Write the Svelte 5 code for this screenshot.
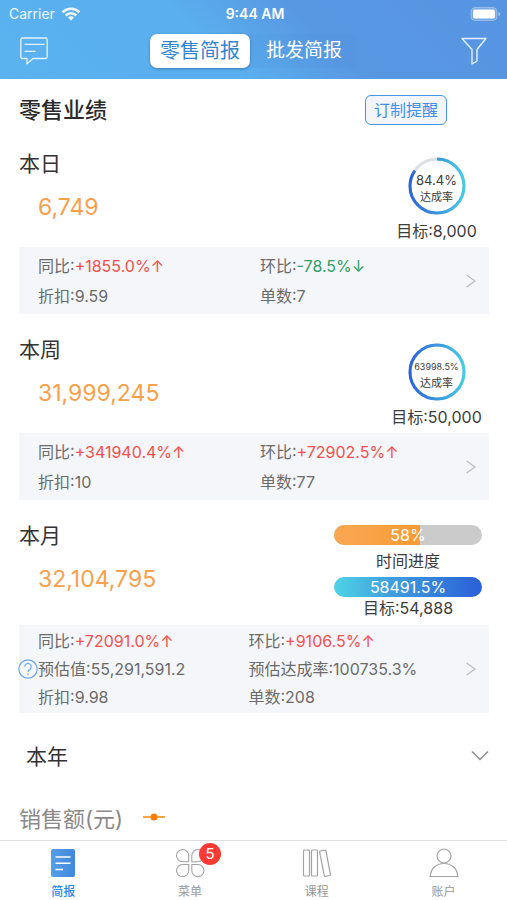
<script>
  let mode = $state('retail');
  let tab = $state('brief');

  const RING = 2 * Math.PI * 27;

  const periods = [
    {
      id: 'day',
      name: '本日',
      value: '6,749',
      rate: '84.4%',
      ratio: 0.844,
      target: '8,000',
      stats: [
        { label: '同比', value: '+1855.0%↑', trend: 'up' },
        { label: '环比', value: '-78.5%↓', trend: 'down' },
        { label: '折扣', value: '9.59' },
        { label: '单数', value: '7' }
      ]
    },
    {
      id: 'week',
      name: '本周',
      value: '31,999,245',
      rate: '63998.5%',
      ratio: 1,
      target: '50,000',
      stats: [
        { label: '同比', value: '+341940.4%↑', trend: 'up' },
        { label: '环比', value: '+72902.5%↑', trend: 'up' },
        { label: '折扣', value: '10' },
        { label: '单数', value: '77' }
      ]
    },
    {
      id: 'month',
      name: '本月',
      value: '32,104,795',
      rate: '58491.5%',
      time: 58,
      target: '54,888',
      stats: [
        { label: '同比', value: '+72091.0%↑', trend: 'up' },
        { label: '环比', value: '+9106.5%↑', trend: 'up' },
        { label: '预估值', value: '55,291,591.2' },
        { label: '预估达成率', value: '100735.3%' },
        { label: '折扣', value: '9.98' },
        { label: '单数', value: '208' }
      ]
    }
  ];

  const tabs = [
    { id: 'brief', label: '简报' },
    { id: 'menu', label: '菜单', badge: 5 },
    { id: 'course', label: '课程' },
    { id: 'account', label: '账户' }
  ];
</script>

<div class="app">
  <header>
    <div class="status">
      <span class="carrier">
        Carrier
        <svg width="20" height="14" viewBox="0 0 20 14" fill="none" stroke="#fff" stroke-width="2.6">
          <path d="M1.6 5.2a12 12 0 0 1 16.8 0" />
          <path d="M4.7 8.5a7.5 7.5 0 0 1 10.6 0" />
          <path d="M10 13.6 6.9 10.5a4.4 4.4 0 0 1 6.2 0z" fill="#fff" stroke="none" />
        </svg>
      </span>
      <span class="clock">9:44 AM</span>
      <span class="battery">
        <svg width="31" height="14" viewBox="0 0 31 14">
          <rect x="1" y="0.5" width="26" height="13" rx="4" fill="#fff" fill-opacity=".2" stroke="#fff" stroke-opacity=".3" />
          <rect x="3" y="2.5" width="22" height="9" rx="2" fill="#fff" />
          <path d="M28.5 5v4q1.8-.6 1.8-2t-1.8-2z" fill="#fff" fill-opacity=".5" />
        </svg>
      </span>
    </div>
    <nav class="top">
      <button class="icon" aria-label="消息">
        <svg width="28" height="28" viewBox="0 0 28 28" fill="none" stroke="#e4f2fd" stroke-width="1.3" stroke-linejoin="round">
          <path d="M2.5 1h23q1.7 0 1.7 1.7v17.1q0 1.7-1.7 1.7H13L7 26.8v-5.3H2.5Q.8 21.5.8 19.8V2.7Q.8 1 2.5 1z" />
          <path d="M4.5 7.3h20M4.500 14.3h11" />
        </svg>
      </button>
      <div class="seg">
        <button class:active={mode === 'retail'} onclick={() => (mode = 'retail')}>零售简报</button>
        <button class:active={mode === 'wholesale'} onclick={() => (mode = 'wholesale')}>批发简报</button>
      </div>
      <button class="icon" aria-label="筛选">
        <svg width="28" height="28" viewBox="0 0 28 28" fill="none" stroke="#e4f0fd" stroke-width="1.4" stroke-linejoin="round">
          <path d="M2 1.5h24L17 12.5V24l-5 3V12.500z" />
        </svg>
      </button>
    </nav>
  </header>

  <main>
    <div class="heading">
      <h1>零售业绩</h1>
      <button class="remind">订制提醒</button>
    </div>

    {#each periods as p}
      <section class={p.id}>
        <div class="summary">
          <div>
            <h2>{p.name}</h2>
            <p class="value">{p.value}</p>
          </div>
          {#if p.time}
            <div class="bars">
              <div class="bar time">
                <i style="width: {p.time}%"></i>
                <span>{p.time}%</span>
              </div>
              <p class="bar-label">时间进度</p>
              <div class="bar rate"><span>{p.rate}</span></div>
              <p class="target">目标:{p.target}</p>
            </div>
          {:else}
            <div class="goal">
              <div class="ring">
                <svg width="58" height="58" viewBox="0 0 58 58" fill="none" stroke-width="3">
                  <defs>
                    <!-- runs top to bottom here, the arc is turned a quarter left -->
                    <linearGradient id="ring-{p.id}" gradientUnits="userSpaceOnUse" x1="0" y1="0" x2="0" y2="58">
                      <stop offset="0" stop-color="#2a5fd8" />
                      <stop offset="1" stop-color="#46cfe4" />
                    </linearGradient>
                  </defs>
                  <circle cx="29" cy="29" r="27" stroke="#dcdfe3" />
                  <circle
                    cx="29"
                    cy="29"
                    r="27"
                    stroke="url(#ring-{p.id})"
                    stroke-dasharray="{RING * p.ratio} {RING}"
                    transform="rotate(-90 29 29)"
                  />
                </svg>
                <div class="ring-text">
                  <b class:small={p.rate.length > 6}>{p.rate}</b>
                  <span>达成率</span>
                </div>
              </div>
              <p class="target">目标:{p.target}</p>
            </div>
          {/if}
        </div>

        <div class="panel">
          {#if p.id === 'month'}
            <button class="help" aria-label="说明">
              <svg width="20" height="20" viewBox="0 0 20 20" fill="none" stroke="#6fa6ee" stroke-width="1.2">
                <circle cx="10" cy="10" r="9.2" />
                <path d="M6.8 7.8a3.2 3.2 0 1 1 5.2 2.4Q10 11.5 10 13M10 14.5V16" />
              </svg>
            </button>
          {/if}
          <a href="#{p.id}">
            <div class="stats">
              {#each p.stats as s}
                <span>{s.label}:<em class={s.trend}>{s.value}</em></span>
              {/each}
            </div>
            <svg width="10" height="14" viewBox="0 0 10 14" fill="none" stroke="#b9bcc0" stroke-width="1.3">
              <path d="M.6 1 9 7 .6 13" />
            </svg>
          </a>
        </div>
      </section>
    {/each}

    <button class="year">
      本年
      <svg width="18" height="11" viewBox="0 0 18 11" fill="none" stroke="#8c8c8c" stroke-width="1.5">
        <path d="M1 1.5l8 8 8-8" />
      </svg>
    </button>

    <div class="legend">
      销售额(元)
      <svg width="22" height="8" viewBox="0 0 22 8">
        <path d="M0 4h22" stroke="#ffa64d" stroke-width="2" />
        <circle cx="11" cy="4" r="3.5" fill="#ff8000" />
      </svg>
    </div>
  </main>

  <nav class="tabs">
    {#each tabs as t}
      <button class:on={tab === t.id} onclick={() => (tab = t.id)}>
        <span class="pic">
          {#if t.id === 'brief'}
            <svg width="30" height="30" viewBox="0 0 30 30">
              <defs>
                <linearGradient id="doc" x1="0" y1="0" x2="1" y2="0">
                  <stop offset="0" stop-color="#549fe8" />
                  <stop offset="1" stop-color="#4287dc" />
                </linearGradient>
              </defs>
              <rect x="3" y="1" width="24" height="28" rx="2" fill="url(#doc)" />
              <path d="M7.5 9h15M7.5 15.3h15M7.5 21.5H15" stroke="#fff" stroke-width="1.5" />
            </svg>
          {:else if t.id === 'menu'}
            <svg width="30" height="30" viewBox="0 0 30 30" fill="none" stroke="#a3a3a3" stroke-width="1.1">
              <path d="M13.7 13.7H7.6a6.1 6.1 0 1 1 6.1-6.1z" />
              <path d="M16.8 13.7V7.6a6.1 6.1 0 1 1 6.1 6.1z" />
              <path d="M13.7 16.5v6.1a6.1 6.1 0 1 1-6.1-6.1z" />
              <path d="M16.8 16.5h6.1a6.1 6.1 0 1 1-6.1 6.1z" />
            </svg>
          {:else if t.id === 'course'}
            <svg width="30" height="30" viewBox="0 0 30 30" fill="none" stroke="#a3a3a3" stroke-width="1.2">
              <rect x="1.5" y="2" width="6" height="26" rx="1" />
              <rect x="9.5" y="2" width="6" height="26" rx="1" />
              <path d="M18.2 3l4.800-.9q.8-.1 1 .7l4.400 23.700q.1.800-.7 1l-4.400.8q-.8.1-1-.7L17.600 4q-.1-.8.600-1z" />
            </svg>
          {:else}
            <svg width="30" height="30" viewBox="0 0 30 30" fill="none" stroke="#a3a3a3" stroke-width="1.2">
              <circle cx="15" cy="8" r="7" />
              <path d="M1.2 28.5C1.6 20.5 7.5 15.5 15 15.5s13.4 5 13.8 13z" />
            </svg>
          {/if}
          {#if t.badge}<span class="badge">{t.badge}</span>{/if}
        </span>
        {t.label}
      </button>
    {/each}
  </nav>
</div>

<style>
  :global(body) {
    margin: 0;
    background: #fff;
  }
  .app {
    display: flex;
    flex-direction: column;
    min-height: 100vh;
    font-family: Inter, "Noto Sans CJK SC", sans-serif;
    font-size: 16px;
    color: #3c3c3c;
  }
  button {
    font: inherit;
    color: inherit;
    background: none;
    border: 0;
    padding: 0;
    cursor: pointer;
  }
  h1, h2, p {
    margin: 0;
    font-weight: 400;
  }
  svg {
    display: block;
    flex: none;
  }

  header {
    background: linear-gradient(45deg, #5ab2ef 0%, #5aafee 42%, #5898e3 62%, #5794e1 100%);
    color: #fff;
  }
  .status {
    display: grid;
    grid-template-columns: 1fr auto 1fr;
    align-items: center;
    height: 27px;
    padding: 0 6px 0 9px;
    font-size: 14px;
  }
  .carrier {
    display: flex;
    align-items: center;
    gap: 6px;
    opacity: 0.9;
  }
  .clock {
    font-weight: 600;
  }
  .battery {
    justify-self: end;
  }
  .top {
    display: flex;
    align-items: center;
    justify-content: space-between;
    height: 48px;
    padding: 0 19px 4px 20px;
  }
  .seg {
    display: flex;
    border-radius: 7px;
    background: rgba(70, 130, 200, 0.08);
  }
  .seg button {
    height: 34px;
    padding: 0 16px;
    border-radius: 7px;
    font-size: 19px;
    line-height: 34px;
  }
  .seg button.active {
    padding: 0 10px;
    font-size: 20px;
    background: #fff;
    color: #3386cf;
    box-shadow: 0 1px 3px rgba(0, 50, 110, 0.4);
  }

  main {
    flex: 1;
    padding: 0 18px 0 19px;
  }
  .heading {
    display: flex;
    align-items: center;
    justify-content: space-between;
    padding: 16px 42px 3px 0;
  }
  h1 {
    font-size: 22px;
    line-height: 30px;
    font-weight: 500;
    color: #2b2b2b;
  }
  .remind {
    height: 30px;
    padding: 0 8px;
    border: 1px solid #4795e6;
    border-radius: 6px;
    background: #f2f6fb;
    color: #3f90e6;
    line-height: 28px;
  }

  .summary {
    display: flex;
    justify-content: space-between;
    height: 119px;
  }
  .month .summary {
    height: 125px;
  }
  h2 {
    padding-top: 21px;
    font-size: 21px;
    line-height: 30px;
    color: #333;
  }
  .value {
    padding: 13px 0 0 19px;
    font-size: 23px;
    line-height: 30px;
    color: #f9a04b;
  }
  .goal {
    width: 105px;
    padding-top: 29px;
    text-align: center;
  }
  .ring {
    display: grid;
    justify-items: center;
  }
  .ring svg,
  .ring-text {
    grid-area: 1 / 1;
  }
  .ring-text {
    display: flex;
    flex-direction: column;
    padding-top: 15px;
    font-size: 11px;
    line-height: 17px;
  }
  .ring-text b {
    font-size: 13px;
    font-weight: 400;
  }
  .ring-text b.small {
    font-size: 9px;
  }
  .target {
    line-height: 22px;
    padding-top: 5px;
    white-space: nowrap;
  }

  .bars {
    width: 148px;
    padding: 25px 7px 0 0;
    text-align: center;
  }
  .bar {
    display: grid;
    height: 20px;
    border-radius: 10px;
    overflow: hidden;
    color: #fff;
    line-height: 20px;
  }
  .bar i,
  .bar span {
    grid-area: 1 / 1;
  }
  .bar.time {
    background: #cbcbcb;
  }
  .bar.time i {
    background: linear-gradient(90deg, #f9a852, #f69b35);
  }
  .bar.rate {
    background: linear-gradient(90deg, #4fd3e6, #3f9ddd 40%, #2a5fd8);
  }
  .bar-label {
    line-height: 32px;
  }
  .bars .target {
    padding-top: 0;
  }

  .panel {
    position: relative;
    background: #f4f6fa;
  }
  .panel a {
    display: flex;
    align-items: center;
    padding: 4px 13px 3px 19px;
    color: #6b6b6b;
    text-decoration: none;
  }
  .stats {
    flex: 1;
    display: grid;
    grid-template-columns: 14fr 13fr;
    line-height: 30px;
    white-space: nowrap;
  }
  .month .panel a {
    padding: 2px 13px 2px 19px;
  }
  .month .stats {
    grid-template-columns: 30fr 31fr;
    line-height: 28px;
  }
  em {
    font-style: normal;
  }
  .up {
    color: #f5504c;
  }
  .down {
    color: #2f9e62;
  }
  .help {
    position: absolute;
    left: -1px;
    top: 34px;
  }

  .year {
    display: flex;
    align-items: center;
    justify-content: space-between;
    width: 100%;
    height: 84px;
    padding: 0 0 0 7px;
    font-size: 21px;
    color: #333;
  }
  .legend {
    display: flex;
    align-items: center;
    gap: 20px;
    height: 40px;
    font-size: 22px;
    color: #8a8a8a;
  }

  .tabs {
    position: sticky;
    bottom: 0;
    display: flex;
    height: 59px;
    border-top: 1px solid #dedede;
    background: #fff;
  }
  .tabs button {
    flex: 1;
    display: flex;
    flex-direction: column;
    align-items: center;
    padding-top: 7px;
    font-size: 12px;
    line-height: 27px;
    color: #999;
  }
  .tabs .on {
    color: #1e88f0;
    font-weight: 500;
  }
  .pic {
    position: relative;
  }
  .badge {
    position: absolute;
    left: 24px;
    top: -5px;
    width: 22px;
    border-radius: 11px;
    background: #fa3a35;
    color: #fff;
    font-size: 15px;
    line-height: 22px;
    text-align: center;
  }
</style>
